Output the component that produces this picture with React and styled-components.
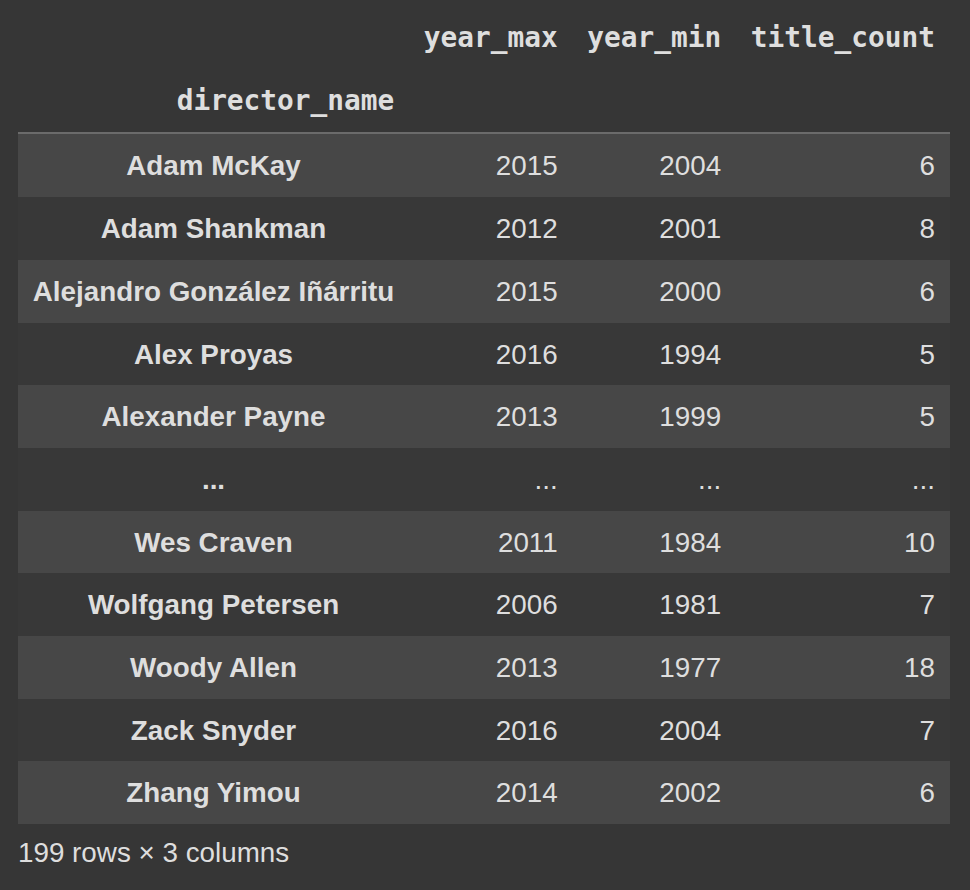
import React from "react";
import styled, { createGlobalStyle } from "styled-components";

const GlobalStyle = createGlobalStyle`
  html, body {
    margin: 0;
    padding: 0;
    background: #363636;
  }
  body {
    font-family: "Liberation Sans", Arial, Helvetica, sans-serif;
    color: #dedede;
  }
`;

const Output = styled.div`
  padding: 7px 0 0 18px;
`;

const Table = styled.table`
  border-collapse: collapse;
  border-spacing: 0;
  font-size: 27.8px;
  color: #dedede;
`;

const HeadCell = styled.th`
  font-family: "DejaVu Sans Mono", "Liberation Mono", monospace;
  font-weight: bold;
  font-size: 27.8px;
  text-align: right;
  vertical-align: middle;
  padding: 0 14.8px;
  height: 62.7px;
  line-height: 62.7px;
  white-space: nowrap;
  color: #dedede;
`;

const HeadRow = styled.tr`
  background: transparent;
  border-bottom: ${(p) => (p.$last ? "2px solid #6b6b6b" : "none")};
`;

const BodyRow = styled.tr`
  background: ${(p) => (p.$odd ? "#474747" : "#383838")};
`;

const IndexCell = styled.th`
  font-family: "Liberation Sans", Arial, Helvetica, sans-serif;
  font-weight: bold;
  text-align: center;
  vertical-align: middle;
  padding: 2px 14.8px 0;
  height: 60.7px;
  line-height: 60.7px;
  white-space: nowrap;
`;

const Cell = styled.td`
  font-family: "Liberation Sans", Arial, Helvetica, sans-serif;
  text-align: right;
  vertical-align: middle;
  padding: 2px 14.8px 0;
  height: 60.7px;
  line-height: 60.7px;
  white-space: nowrap;
`;

const Footer = styled.p`
  margin: 13px 0 0 0;
  font-size: 27.8px;
  line-height: 32px;
  color: #dedede;
`;

const rows = [
  ["Adam McKay", "2015", "2004", "6"],
  ["Adam Shankman", "2012", "2001", "8"],
  ["Alejandro González Iñárritu", "2015", "2000", "6"],
  ["Alex Proyas", "2016", "1994", "5"],
  ["Alexander Payne", "2013", "1999", "5"],
  ["...", "...", "...", "..."],
  ["Wes Craven", "2011", "1984", "10"],
  ["Wolfgang Petersen", "2006", "1981", "7"],
  ["Woody Allen", "2013", "1977", "18"],
  ["Zack Snyder", "2016", "2004", "7"],
  ["Zhang Yimou", "2014", "2002", "6"],
];

export default function App() {
  return (
    <>
      <GlobalStyle />
      <Output>
        <Table>
          <thead>
            <HeadRow>
              <HeadCell></HeadCell>
              <HeadCell>year_max</HeadCell>
              <HeadCell>year_min</HeadCell>
              <HeadCell>title_count</HeadCell>
            </HeadRow>
            <HeadRow $last>
              <HeadCell>director_name</HeadCell>
              <HeadCell></HeadCell>
              <HeadCell></HeadCell>
              <HeadCell></HeadCell>
            </HeadRow>
          </thead>
          <tbody>
            {rows.map((r, i) => (
              <BodyRow key={i} $odd={i % 2 === 0}>
                <IndexCell>{r[0]}</IndexCell>
                <Cell>{r[1]}</Cell>
                <Cell>{r[2]}</Cell>
                <Cell>{r[3]}</Cell>
              </BodyRow>
            ))}
          </tbody>
        </Table>
        <Footer>199 rows × 3 columns</Footer>
      </Output>
    </>
  );
}
